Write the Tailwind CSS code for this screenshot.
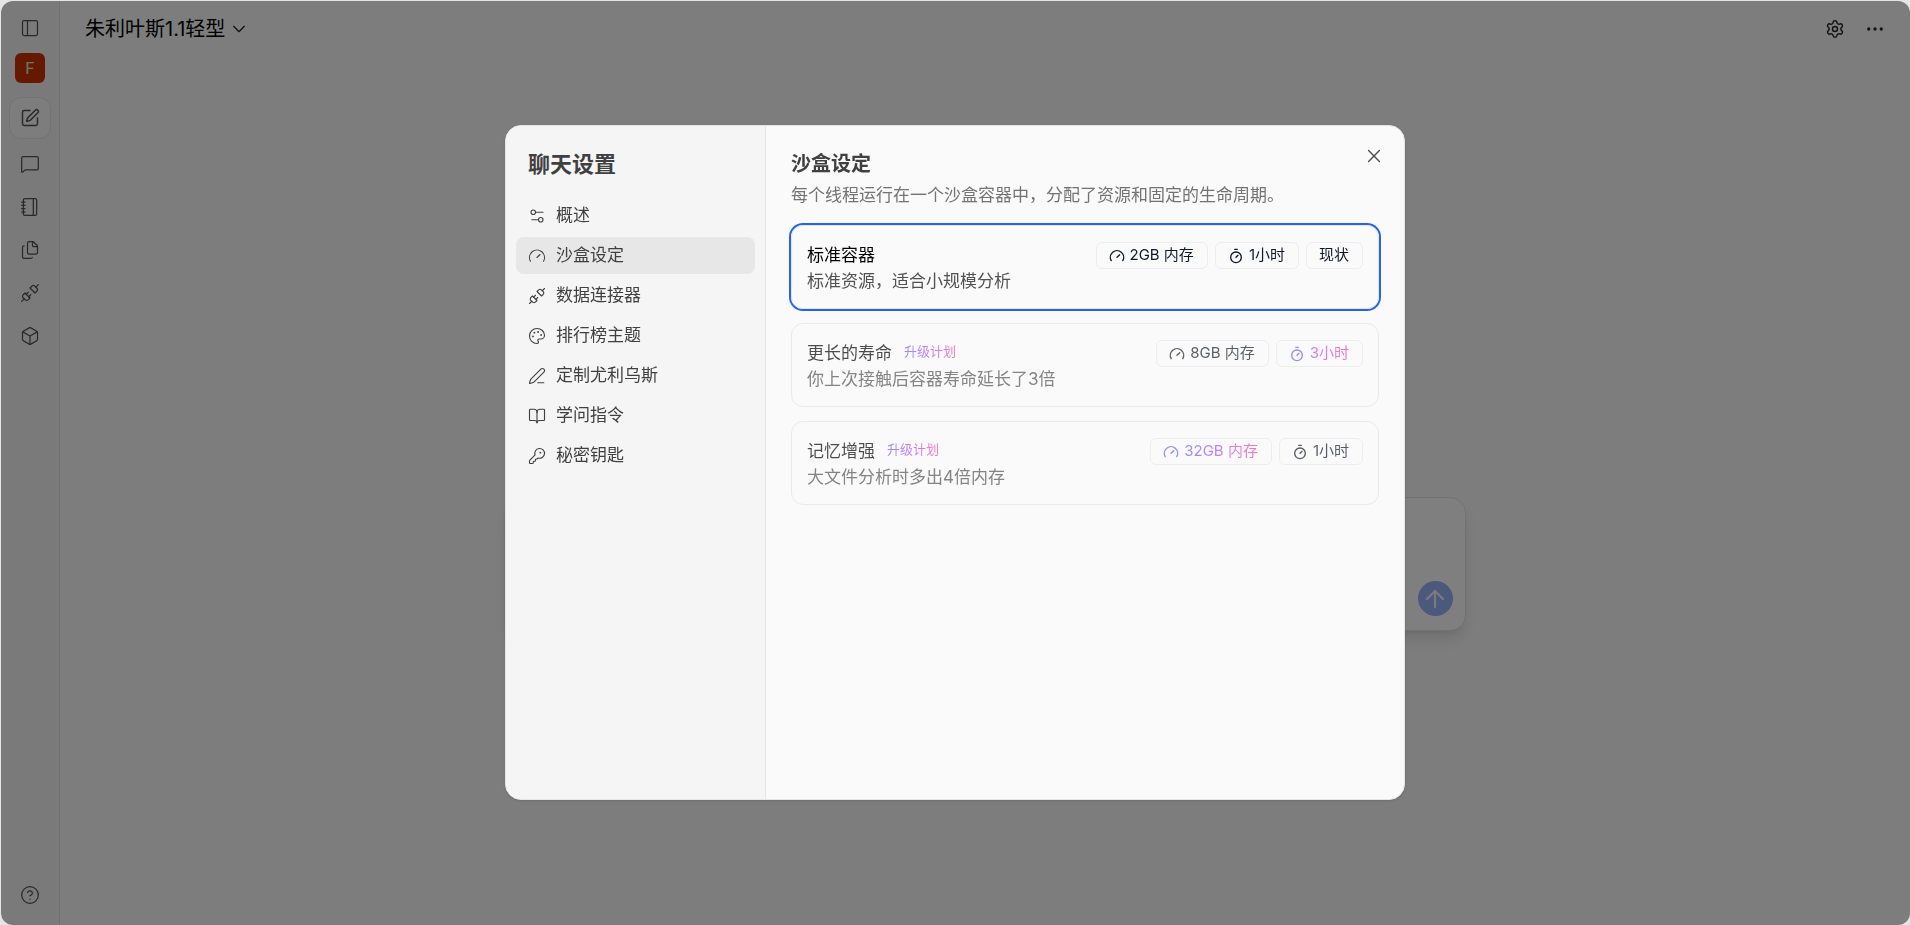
<!DOCTYPE html>
<html lang="zh-CN">
<head>
    <meta charset="UTF-8">
    <meta name="viewport" content="width=device-width, initial-scale=1.0">
    <title>朱利叶斯1.1轻型</title>
    <script src="https://cdn.jsdelivr.net/npm/@tailwindcss/browser@4"></script>
</head>
<body class="h-screen overflow-hidden bg-neutral-200 pt-px pl-px font-['Inter','Noto_Sans_CJK_SC',sans-serif]">
    <!-- Shared icons -->
    <svg class="hidden">
        <symbol id="gauge" viewBox="0 0 24 24"><path d="m12 14 4-4"/><path d="M3.34 19a10 10 0 1 1 17.32 0"/></symbol>
        <symbol id="timer" viewBox="0 0 24 24"><path d="M10 2h4"/><path d="m12 14 3-3"/><circle cx="12" cy="14" r="8"/></symbol>
        <symbol id="unplug" viewBox="0 0 24 24"><path d="m19 5 3-3"/><path d="m2 22 3-3"/><path d="M6.3 20.3a2.4 2.4 0 0 0 3.4 0L12 18l-6-6-2.3 2.3a2.4 2.4 0 0 0 0 3.4Z"/><path d="m7.5 13.5 2.5-2.5"/><path d="m10.5 16.5 2.5-2.5"/><path d="m12 6 6 6 2.3-2.3a2.4 2.4 0 0 0 0-3.4l-2.6-2.6a2.4 2.4 0 0 0-3.4 0Z"/></symbol>
    </svg>

    <div class="relative flex h-full overflow-hidden rounded-xl bg-neutral-50">
        <!-- Sidebar -->
        <aside class="flex w-[59px] shrink-0 flex-col items-center border-r border-neutral-200 bg-[#f5f5f5] pt-[17px] pb-5 text-neutral-600">
            <button aria-label="侧边栏">
                <svg class="size-5" viewBox="0 0 24 24" fill="none" stroke="currentColor" stroke-width="1.5" stroke-linecap="round" stroke-linejoin="round"><rect width="18" height="18" x="3" y="3" rx="2"/><path d="M9 3v18"/></svg>
            </button>
            <button class="mt-[15px] size-[30px] rounded-md bg-orange-700 text-base text-neutral-200">F</button>
            <button class="mt-3.5 flex size-[42px] items-center justify-center rounded-xl border border-neutral-200 bg-neutral-50" aria-label="新聊天">
                <svg class="size-5" viewBox="0 0 24 24" fill="none" stroke="currentColor" stroke-width="1.75" stroke-linecap="round" stroke-linejoin="round"><path d="M12 3H5a2 2 0 0 0-2 2v14a2 2 0 0 0 2 2h14a2 2 0 0 0 2-2v-7"/><path d="M18.375 2.625a1 1 0 0 1 3 3l-9.013 9.014a2 2 0 0 1-.853.505l-2.873.84a.5.5 0 0 1-.62-.62l.84-2.873a2 2 0 0 1 .506-.852z"/></svg>
            </button>
            <nav class="mt-[15px] flex flex-col gap-[23px]">
                <a href="#" aria-label="聊天">
                    <svg class="size-5" viewBox="0 0 24 24" fill="none" stroke="currentColor" stroke-width="1.5" stroke-linecap="round" stroke-linejoin="round"><path d="M22 17a2 2 0 0 1-2 2H6.828a2 2 0 0 0-1.414.586l-2.202 2.202A.71.71 0 0 1 2 21.286V5a2 2 0 0 1 2-2h16a2 2 0 0 1 2 2z"/></svg>
                </a>
                <a href="#" aria-label="笔记本">
                    <svg class="size-5" viewBox="0 0 24 24" fill="none" stroke="currentColor" stroke-width="1.5" stroke-linecap="round" stroke-linejoin="round"><path d="M2 6h4"/><path d="M2 10h4"/><path d="M2 14h4"/><path d="M2 18h4"/><rect width="16" height="20" x="4" y="2" rx="2"/><path d="M16 2v20"/></svg>
                </a>
                <a href="#" aria-label="文件">
                    <svg class="size-5" viewBox="0 0 24 24" fill="none" stroke="currentColor" stroke-width="1.5" stroke-linecap="round" stroke-linejoin="round"><path d="M15 2h-4a2 2 0 0 0-2 2v11a2 2 0 0 0 2 2h8a2 2 0 0 0 2-2V8"/><path d="M16.706 2.706A2.4 2.4 0 0 0 15 2v5a1 1 0 0 0 1 1h5a2.4 2.4 0 0 0-.706-1.706z"/><path d="M5 7a2 2 0 0 0-2 2v11a2 2 0 0 0 2 2h8a2 2 0 0 0 1.732-1"/></svg>
                </a>
                <a href="#" aria-label="连接器">
                    <svg class="size-5" fill="none" stroke="currentColor" stroke-width="1.5" stroke-linecap="round" stroke-linejoin="round"><use href="#unplug"/></svg>
                </a>
                <a href="#" aria-label="模型">
                    <svg class="size-5" viewBox="0 0 24 24" fill="none" stroke="currentColor" stroke-width="1.5" stroke-linecap="round" stroke-linejoin="round"><path d="M21 8a2 2 0 0 0-1-1.73l-7-4a2 2 0 0 0-2 0l-7 4A2 2 0 0 0 3 8v8a2 2 0 0 0 1 1.73l7 4a2 2 0 0 0 2 0l7-4A2 2 0 0 0 21 16Z"/><path d="m3.3 7 8.7 5 8.7-5"/><path d="M12 22V12"/></svg>
                </a>
            </nav>
            <button class="mt-auto" aria-label="帮助">
                <svg class="size-5" viewBox="0 0 24 24" fill="none" stroke="currentColor" stroke-width="1.5" stroke-linecap="round" stroke-linejoin="round"><circle cx="12" cy="12" r="10"/><path d="M9.09 9a3 3 0 0 1 5.83 1c0 2-3 3-3 3"/><path d="M12 17h.01"/></svg>
            </button>
        </aside>

        <!-- Chat -->
        <div class="flex min-w-0 grow flex-col">
            <header class="flex h-14 items-center justify-between pr-[25px] pl-[25px]">
                <button class="flex items-center gap-1.5 text-xl text-black">
                    朱利叶斯1.1轻型
                    <svg class="size-4" viewBox="0 0 24 24" fill="none" stroke="#262626" stroke-width="2" stroke-linecap="round" stroke-linejoin="round"><path d="m4 8 8 8 8-8"/></svg>
                </button>
                <div class="flex gap-5 text-neutral-800">
                    <button aria-label="设置">
                        <svg class="size-5" viewBox="0 0 24 24" fill="none" stroke="currentColor" stroke-width="1.75" stroke-linecap="round" stroke-linejoin="round"><path d="M9.671 4.136a2.34 2.34 0 0 1 4.659 0 2.34 2.34 0 0 0 3.319 1.915 2.34 2.34 0 0 1 2.33 4.033 2.34 2.34 0 0 0 0 3.831 2.34 2.34 0 0 1-2.33 4.033 2.34 2.34 0 0 0-3.319 1.915 2.34 2.34 0 0 1-4.659 0 2.34 2.34 0 0 0-3.32-1.915 2.34 2.34 0 0 1-2.33-4.033 2.34 2.34 0 0 0 0-3.831A2.34 2.34 0 0 1 6.35 6.051a2.34 2.34 0 0 0 3.319-1.915"/><circle cx="12" cy="12" r="3"/></svg>
                    </button>
                    <button aria-label="更多">
                        <svg class="size-5" viewBox="0 0 24 24" fill="currentColor"><circle cx="4.5" cy="12" r="2"/><circle cx="12" cy="12" r="2"/><circle cx="19.5" cy="12" r="2"/></svg>
                    </button>
                </div>
            </header>
            <main class="flex justify-center pt-[440px]">
                <form class="flex h-[134px] w-full max-w-[961px] items-end rounded-2xl border border-neutral-200 bg-white p-3 pb-3.5 shadow-lg">
                    <textarea class="h-full grow resize-none outline-none" aria-label="消息"></textarea>
                    <button type="button" class="flex size-[35px] items-center justify-center rounded-full bg-[#96b2f8]" aria-label="发送">
                        <svg class="size-6" viewBox="0 0 24 24" fill="none" stroke="#f5f5f5" stroke-width="2.25" stroke-linecap="round" stroke-linejoin="round"><path d="m4 12 8-8 8 8"/><path d="M12 20V4"/></svg>
                    </button>
                </form>
            </main>
        </div>
        <div class="absolute inset-0 bg-black/50"></div>
    </div>

    <!-- Settings dialog -->
    <div class="fixed inset-0 flex items-center justify-center">
        <div role="dialog" aria-labelledby="dialog-title" class="relative flex h-[675px] w-full max-w-[900px] overflow-hidden rounded-2xl border border-neutral-200 bg-neutral-50 shadow-sm">
            <div class="w-[260px] shrink-0 border-r border-neutral-200 bg-neutral-100 px-2.5 pt-[22px]">
                <h2 id="dialog-title" class="px-3 text-[22px] leading-8 font-bold text-neutral-700">聊天设置</h2>
                <nav class="mt-[17px] flex flex-col gap-[3px] text-[17px] text-neutral-700">
                    <a href="#" class="flex h-[37px] items-center gap-2.5 rounded-lg px-3">
                        <svg class="size-[18px]" viewBox="0 0 24 24" fill="none" stroke="currentColor" stroke-width="1.5" stroke-linecap="round" stroke-linejoin="round"><path d="M20 7h-9"/><path d="M14 17H5"/><circle cx="17" cy="17" r="3"/><circle cx="7" cy="7" r="3"/></svg>
                        概述
                    </a>
                    <a href="#" class="flex h-[37px] items-center gap-2.5 rounded-lg bg-[#e7e7e7] px-3">
                        <svg class="size-[18px]" fill="none" stroke="currentColor" stroke-width="1.5" stroke-linecap="round" stroke-linejoin="round"><use href="#gauge"/></svg>
                        沙盒设定
                    </a>
                    <a href="#" class="flex h-[37px] items-center gap-2.5 rounded-lg px-3">
                        <svg class="size-[18px]" fill="none" stroke="currentColor" stroke-width="1.5" stroke-linecap="round" stroke-linejoin="round"><use href="#unplug"/></svg>
                        数据连接器
                    </a>
                    <a href="#" class="flex h-[37px] items-center gap-2.5 rounded-lg px-3">
                        <svg class="size-[18px]" viewBox="0 0 24 24" fill="none" stroke="currentColor" stroke-width="1.5" stroke-linecap="round" stroke-linejoin="round"><path d="M12 22a1 1 0 0 1 0-20 10 9 0 0 1 10 9 5 5 0 0 1-5 5h-2.25a1.75 1.75 0 0 0-1.4 2.8l.3.4a1.75 1.75 0 0 1-1.4 2.8z"/><circle cx="13.5" cy="6.5" r=".5" fill="currentColor"/><circle cx="17.5" cy="10.5" r=".5" fill="currentColor"/><circle cx="6.5" cy="12.5" r=".5" fill="currentColor"/><circle cx="8.5" cy="7.5" r=".5" fill="currentColor"/></svg>
                        排行榜主题
                    </a>
                    <a href="#" class="flex h-[37px] items-center gap-2.5 rounded-lg px-3">
                        <svg class="size-[18px]" viewBox="0 0 24 24" fill="none" stroke="currentColor" stroke-width="1.5" stroke-linecap="round" stroke-linejoin="round"><path d="M13 21h8"/><path d="M21.174 6.812a1 1 0 0 0-3.986-3.987L3.842 16.174a2 2 0 0 0-.5.83l-1.321 4.352a.5.5 0 0 0 .623.622l4.353-1.32a2 2 0 0 0 .83-.497z"/></svg>
                        定制尤利乌斯
                    </a>
                    <a href="#" class="flex h-[37px] items-center gap-2.5 rounded-lg px-3">
                        <svg class="size-[18px]" viewBox="0 0 24 24" fill="none" stroke="currentColor" stroke-width="1.5" stroke-linecap="round" stroke-linejoin="round"><path d="M12 7v14"/><path d="M3 18a1 1 0 0 1-1-1V4a1 1 0 0 1 1-1h5a4 4 0 0 1 4 4 4 4 0 0 1 4-4h5a1 1 0 0 1 1 1v13a1 1 0 0 1-1 1h-6a3 3 0 0 0-3 3 3 3 0 0 0-3-3z"/></svg>
                        学问指令
                    </a>
                    <a href="#" class="flex h-[37px] items-center gap-2.5 rounded-lg px-3">
                        <svg class="size-[18px]" viewBox="0 0 24 24" fill="none" stroke="currentColor" stroke-width="1.5" stroke-linecap="round" stroke-linejoin="round"><path d="M2.586 17.414A2 2 0 0 0 2 18.828V21a1 1 0 0 0 1 1h3a1 1 0 0 0 1-1v-1a1 1 0 0 1 1-1h1a1 1 0 0 0 1-1v-1a1 1 0 0 1 1-1h.172a2 2 0 0 0 1.414-.586l.814-.814a6.5 6.5 0 1 0-4-4z"/><circle cx="16.5" cy="7.5" r=".5" fill="currentColor"/></svg>
                        秘密钥匙
                    </a>
                </nav>
            </div>

            <div class="grow px-[25px] pt-6">
                <h3 class="text-[20px] leading-7 font-bold text-neutral-700">沙盒设定</h3>
                <p class="mt-[3px] text-[17px] leading-7 text-neutral-500">每个线程运行在一个沙盒容器中，分配了资源和固定的生命周期。</p>
                <div class="mt-4 flex flex-col gap-3.5">
                    <button class="flex h-[84px] items-start justify-between rounded-xl border border-neutral-200 px-[15px] pt-4 text-left ring-2 ring-[#2563eb]">
                        <div class="text-[17px] leading-[26px]">
                            <div class="text-black">标准容器</div>
                            <div class="text-neutral-600">标准资源，适合小规模分析</div>
                        </div>
                        <div class="flex gap-[7px] text-[15px] text-slate-900">
                            <span class="flex h-[27px] items-center gap-[5px] rounded-md border border-neutral-200/60 pr-[13px] pl-3">
                                <svg class="size-4" fill="none" stroke="currentColor" stroke-width="2" stroke-linecap="round" stroke-linejoin="round"><use href="#gauge"/></svg>
                                2GB 内存
                            </span>
                            <span class="flex h-[27px] items-center gap-[5px] rounded-md border border-neutral-200/60 pr-[13px] pl-3">
                                <svg class="size-4" fill="none" stroke="currentColor" stroke-width="2" stroke-linecap="round" stroke-linejoin="round"><use href="#timer"/></svg>
                                1小时
                            </span>
                            <span class="flex h-[27px] items-center rounded-md border border-neutral-200/60 pr-[13px] pl-3">现状</span>
                        </div>
                    </button>

                    <button class="flex h-[84px] items-start justify-between rounded-xl border border-neutral-200/80 px-[15px] pt-4 text-left">
                        <div class="text-[17px] leading-[26px] opacity-70">
                            <div class="flex gap-3 text-black">更长的寿命 <span class="bg-linear-to-r from-indigo-500 via-purple-500 to-pink-500 bg-clip-text text-[13px] leading-[22px] text-transparent">升级计划</span></div>
                            <div class="text-neutral-600">你上次接触后容器寿命延长了3倍</div>
                        </div>
                        <div class="flex gap-[7px] text-[15px] text-slate-900/70">
                            <span class="flex h-[27px] items-center gap-[5px] rounded-md border border-neutral-200/60 pr-[13px] pl-3">
                                <svg class="size-4" fill="none" stroke="currentColor" stroke-width="2" stroke-linecap="round" stroke-linejoin="round"><use href="#gauge"/></svg>
                                8GB 内存
                            </span>
                            <span class="flex h-[27px] items-center gap-[5px] rounded-md border border-neutral-200/60 pr-[13px] pl-3">
                                <svg class="size-4 text-indigo-500/70" fill="none" stroke="currentColor" stroke-width="2" stroke-linecap="round" stroke-linejoin="round"><use href="#timer"/></svg>
                                <span class="bg-linear-to-r from-purple-500 to-pink-500 bg-clip-text text-transparent opacity-70">3小时</span>
                            </span>
                        </div>
                    </button>

                    <button class="flex h-[84px] items-start justify-between rounded-xl border border-neutral-200/80 px-[15px] pt-4 text-left">
                        <div class="text-[17px] leading-[26px] opacity-70">
                            <div class="flex gap-3 text-black">记忆增强 <span class="bg-linear-to-r from-indigo-500 via-purple-500 to-pink-500 bg-clip-text text-[13px] leading-[22px] text-transparent">升级计划</span></div>
                            <div class="text-neutral-600">大文件分析时多出4倍内存</div>
                        </div>
                        <div class="flex gap-[7px] text-[15px] text-slate-900/70">
                            <span class="flex h-[27px] items-center gap-[5px] rounded-md border border-neutral-200/60 pr-[13px] pl-3">
                                <svg class="size-4 text-indigo-500/70" fill="none" stroke="currentColor" stroke-width="2" stroke-linecap="round" stroke-linejoin="round"><use href="#gauge"/></svg>
                                <span class="bg-linear-to-r from-indigo-500 via-purple-500 to-pink-500 bg-clip-text text-transparent opacity-70">32GB 内存</span>
                            </span>
                            <span class="flex h-[27px] items-center gap-[5px] rounded-md border border-neutral-200/60 pr-[13px] pl-3">
                                <svg class="size-4" fill="none" stroke="currentColor" stroke-width="2" stroke-linecap="round" stroke-linejoin="round"><use href="#timer"/></svg>
                                1小时
                            </span>
                        </div>
                    </button>
                </div>
            </div>

            <button class="absolute top-5 right-5 text-neutral-600" aria-label="关闭">
                <svg class="size-5" viewBox="0 0 24 24" fill="none" stroke="currentColor" stroke-width="1.75" stroke-linecap="round" stroke-linejoin="round"><path d="M18.5 5.5 5.5 18.5"/><path d="m5.5 5.5 13 13"/></svg>
            </button>
        </div>
    </div>
</body>
</html>
